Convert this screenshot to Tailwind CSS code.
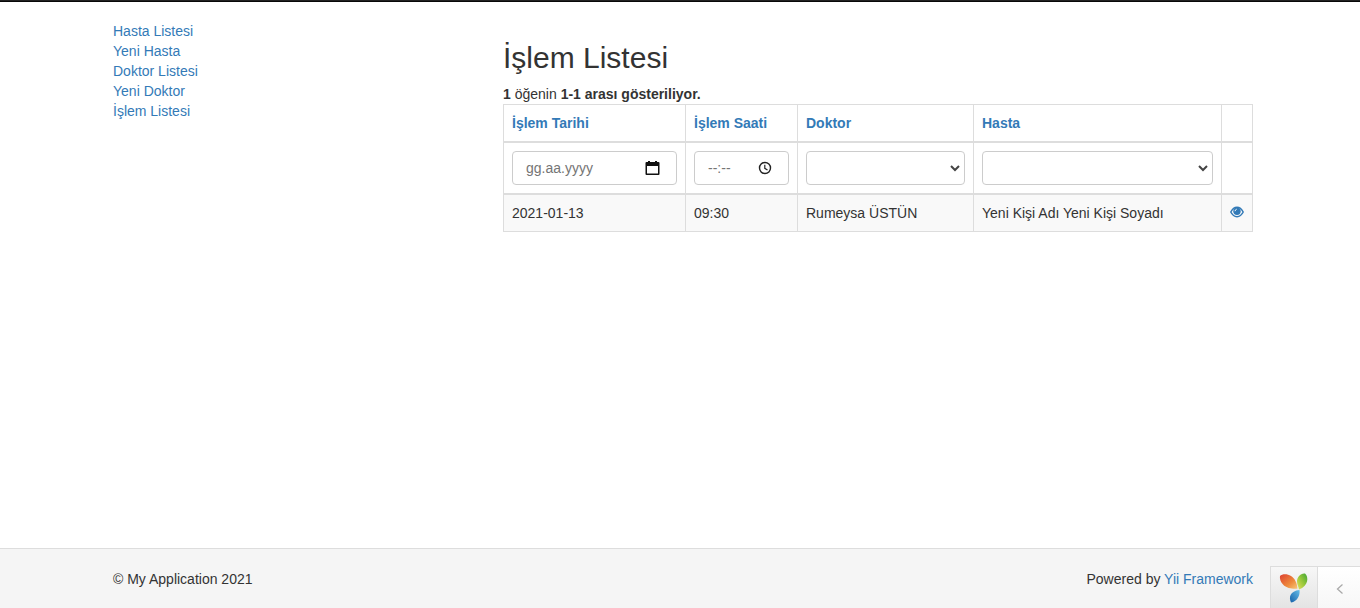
<!DOCTYPE html>
<html lang="tr">
<head>
    <meta charset="UTF-8">
    <meta name="viewport" content="width=device-width, initial-scale=1.0">
    <title>İşlem Listesi</title>
    <script src="https://cdn.jsdelivr.net/npm/@tailwindcss/browser@4"></script>
    <style>
        body {
            font-family: "Liberation Sans", Arial, sans-serif;
        }
    </style>
</head>
<body class="min-h-screen flex flex-col bg-white text-sm leading-5 text-[#333333]">
    <!-- Navbar edge -->
    <header class="h-[2px] bg-[#222222] border-b border-[#080808]"></header>

    <!-- Content -->
    <main class="flex-grow w-full pl-[6px]">
        <div class="max-w-[1140px] mx-auto pt-[19px] pb-5 grid grid-cols-12 gap-x-[30px]">
            <nav class="col-span-4 flex flex-col items-start text-[#337ab7]">
                <a href="#" class="hover:underline">Hasta Listesi</a>
                <a href="#" class="hover:underline">Yeni Hasta</a>
                <a href="#" class="hover:underline">Doktor Listesi</a>
                <a href="#" class="hover:underline">Yeni Doktor</a>
                <a href="#" class="hover:underline">İşlem Listesi</a>
            </nav>

            <section class="col-span-8">
                <h1 class="mt-5 mb-[10px] text-[30px] leading-[33px]">İşlem Listesi</h1>
                <div><b>1</b> öğenin <b>1-1 arası gösteriliyor.</b></div>

                <table class="w-full table-fixed border-collapse border border-[#dddddd]">
                    <colgroup>
                        <col class="w-[182px]">
                        <col class="w-[112px]">
                        <col class="w-[176px]">
                        <col>
                        <col class="w-[31px]">
                    </colgroup>
                    <thead>
                        <tr class="text-left text-[#337ab7]">
                            <th class="p-2 border border-b-2 border-[#dddddd]"><a href="#">İşlem Tarihi</a></th>
                            <th class="p-2 border border-b-2 border-[#dddddd]"><a href="#">İşlem Saati</a></th>
                            <th class="p-2 border border-b-2 border-[#dddddd]"><a href="#">Doktor</a></th>
                            <th class="p-2 border border-b-2 border-[#dddddd]"><a href="#">Hasta</a></th>
                            <td class="border border-b-2 border-[#dddddd]"></td>
                        </tr>
                        <!-- Filters -->
                        <tr>
                            <td class="p-2 border border-b-2 border-[#dddddd]">
                                <div class="relative">
                                    <input type="text" aria-label="İşlem Tarihi" placeholder="gg.aa.yyyy" class="block w-full h-[34px] px-[13px] border border-[#cccccc] rounded-sm text-[#555555] placeholder:text-[#757575]">
                                    <svg class="absolute right-4 top-2 w-4 h-[18px]" viewBox="0 0 16 18" fill="#111111">
                                        <path d="M3 2h2v1h5V2h2v1h1.500q1 0 1 1v11q0 1-1 1h-12q-1 0-1-1V4q0-1 1-1H3zM2 7v7.500h11V7z"/>
                                    </svg>
                                </div>
                            </td>
                            <td class="p-2 border border-b-2 border-[#dddddd]">
                                <div class="relative">
                                    <input type="text" aria-label="İşlem Saati" placeholder="--:--" class="block w-full h-[34px] px-[13px] border border-[#cccccc] rounded-sm text-[#555555] placeholder:text-[#757575]">
                                    <svg class="absolute right-4 top-[9px] w-4 h-4" viewBox="0 0 16 16" fill="none" stroke="#222222" stroke-width="1.4">
                                        <circle cx="8" cy="8" r="5.500"/>
                                        <path d="M7.800 4.700v3.600l2.700 1.700" stroke-width="1.200"/>
                                    </svg>
                                </div>
                            </td>
                            <td class="p-2 border border-b-2 border-[#dddddd]">
                                <div class="relative">
                                    <select aria-label="Doktor" class="block w-full h-[34px] appearance-none bg-white border border-[#cccccc] rounded-sm text-[#555555]">
                                        <option></option>
                                        <option>Rumeysa ÜSTÜN</option>
                                    </select>
                                    <svg class="absolute right-1 top-[13px] w-3 h-2 pointer-events-none" viewBox="0 0 12 8" fill="none" stroke="#444444" stroke-width="2">
                                        <path d="M2 2l4 4 4-4"/>
                                    </svg>
                                </div>
                            </td>
                            <td class="p-2 border border-b-2 border-[#dddddd]">
                                <div class="relative">
                                    <select aria-label="Hasta" class="block w-full h-[34px] appearance-none bg-white border border-[#cccccc] rounded-sm text-[#555555]">
                                        <option></option>
                                        <option>Yeni Kişi Adı Yeni Kişi Soyadı</option>
                                    </select>
                                    <svg class="absolute right-1 top-[13px] w-3 h-2 pointer-events-none" viewBox="0 0 12 8" fill="none" stroke="#444444" stroke-width="2">
                                        <path d="M2 2l4 4 4-4"/>
                                    </svg>
                                </div>
                            </td>
                            <td class="border border-b-2 border-[#dddddd]"></td>
                        </tr>
                    </thead>
                    <tbody>
                        <tr class="bg-[#f9f9f9]">
                            <td class="p-2 border border-[#dddddd]">2021-01-13</td>
                            <td class="p-2 border border-[#dddddd]">09:30</td>
                            <td class="p-2 border border-[#dddddd]">Rumeysa ÜSTÜN</td>
                            <td class="p-2 border border-[#dddddd]">Yeni Kişi Adı Yeni Kişi Soyadı</td>
                            <td class="px-2 border border-[#dddddd]">
                                <a href="#" aria-label="Görüntüle" class="block pb-[2px] text-[#337ab7]">
                                    <svg class="w-[14px] h-3" viewBox="0 0 14 12" fill="none" stroke="currentColor">
                                        <path stroke-width="1.500" d="M.800 6C2.300 3 4.300 1.200 7 1.200S11.700 3 13.200 6C11.700 9 9.700 10.700 7 10.700S2.300 9 .800 6z"/>
                                        <circle cx="7" cy="5.300" r="3.700" fill="currentColor" stroke="none"/>
                                        <path stroke="#f9f9f9" stroke-width="1" d="M5 5.200Q5.200 3.600 6.700 3.200"/>
                                    </svg>
                                </a>
                            </td>
                        </tr>
                    </tbody>
                </table>
            </section>
        </div>
    </main>

    <!-- Footer -->
    <footer class="h-[60px] pt-5 pl-[6px] bg-[#f5f5f5] border-t border-[#dddddd]">
        <div class="max-w-[1140px] mx-auto flex justify-between">
            <p>&copy; My Application 2021</p>
            <p>Powered by <a href="#" class="text-[#337ab7] hover:underline">Yii Framework</a></p>
        </div>
    </footer>

    <!-- Debug toolbar -->
    <div class="fixed right-0 bottom-0 h-[42px] flex border-t border-l border-[#dddddd]">
        <a href="#" aria-label="Yii Debugger" class="w-[47px] flex justify-center pt-1 bg-linear-to-b from-[#f7f7f7] to-[#e4e4e4] border-r border-[#dddddd]">
            <svg class="w-[30px] h-8" viewBox="0 0 30 32">
                <defs>
                    <linearGradient id="leafOrange" x1="0" y1="0" x2="1" y2="1">
                        <stop offset="0" stop-color="#dd4030"/>
                        <stop offset=".6" stop-color="#ee8a3c"/>
                        <stop offset="1" stop-color="#f8c878"/>
                    </linearGradient>
                    <linearGradient id="leafGreen" x1="1" y1="0" x2="0" y2="1">
                        <stop offset="0" stop-color="#3fa535"/>
                        <stop offset=".5" stop-color="#98c83a"/>
                        <stop offset="1" stop-color="#e8e060"/>
                    </linearGradient>
                    <linearGradient id="stemBlue" x1="1" y1="0" x2="0" y2="1">
                        <stop offset="0" stop-color="#66bde8"/>
                        <stop offset="1" stop-color="#1560a8"/>
                    </linearGradient>
                </defs>
                <path fill="url(#leafOrange)" d="M1 5C3 3 8 2.500 12 5c4 2.500 6 7 6.500 12.500C16 18 8 18 4 13.500 1.500 11 .500 7.500 1 5z"/>
                <path fill="url(#leafGreen)" d="M26 2.500C30 6 29.500 15 20 18.500c0-2-2-4.500-2-8C18 6 21.500 2 26 2.500z"/>
                <path fill="url(#stemBlue)" d="M20.500 19c.700 5-2 11.500-8.500 12.500C9.500 26.500 11 20 20.500 19z"/>
            </svg>
        </a>
        <button type="button" aria-label="Aç" class="w-[42px] flex items-center justify-center pl-[2px] pt-[3px] bg-linear-to-b from-white to-[#f7f7f7]">
            <svg class="w-2 h-3" viewBox="0 0 8 12" fill="none" stroke="#aaaaaa" stroke-width="1.300">
                <path d="M6.500 1.500L1.500 6l5 4.500"/>
            </svg>
        </button>
    </div>
</body>
</html>
